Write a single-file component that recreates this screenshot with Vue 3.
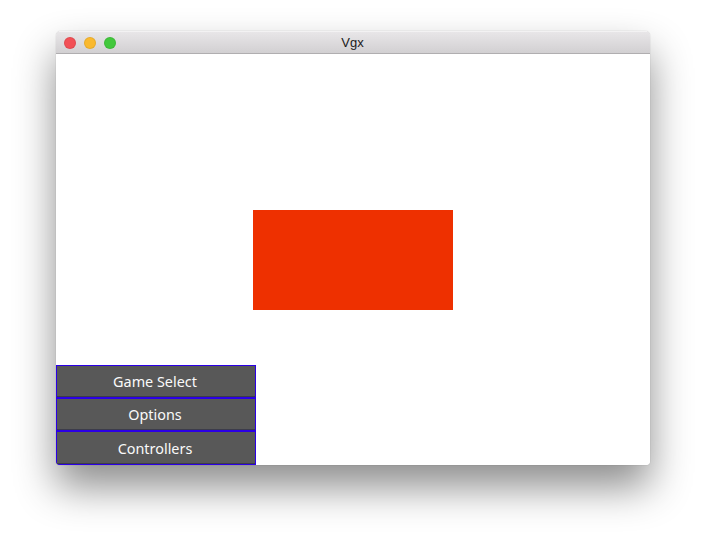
<template>
  <div class="desktop">
    <div class="window">
      <div class="titlebar">
        <div class="lights">
          <span class="light red"></span>
          <span class="light yellow"></span>
          <span class="light green"></span>
        </div>
        <div class="title">Vgx</div>
      </div>
      <div class="content">
        <div class="rect"></div>
        <div class="menu">
          <button v-for="item in items" :key="item" class="menu-btn">{{ item }}</button>
        </div>
      </div>
    </div>
  </div>
</template>

<script setup>
const items = ['Game Select', 'Options', 'Controllers']
</script>

<style>
html, body {
  margin: 0;
  background: #fff;
}
</style>

<style scoped>
.desktop {
  width: 706px;
  height: 545px;
  padding: 31px 56px 80px;
  box-sizing: border-box;
  background: #fff;
  overflow: hidden;
}

.window {
  width: 594px;
  height: 434px;
  border-radius: 5px 5px 4px 4px;
  overflow: hidden;
  display: flex;
  flex-direction: column;
  box-shadow: 0 22px 40px rgba(0, 0, 0, 0.45), 0 0 1px rgba(0, 0, 0, 0.35);
}

.titlebar {
  height: 21px;
  flex: none;
  position: relative;
  display: flex;
  align-items: center;
  justify-content: center;
  background: linear-gradient(#e8e6e8, #d2d0d2);
  border-top: 1px solid #f3f2f3;
  border-bottom: 1px solid #b0aeb0;
  box-sizing: content-box;
}

.lights {
  position: absolute;
  left: 8px;
  top: 5px;
  display: flex;
  gap: 8px;
}

.light {
  width: 12px;
  height: 12px;
  border-radius: 50%;
  box-shadow: inset 0 0 0 1px rgba(0, 0, 0, 0.08);
}

.red { background: #f25056; }
.yellow { background: #fab92e; }
.green { background: #42c83c; }

.title {
  padding-right: 1px;
  font-family: "Liberation Sans", Arial, sans-serif;
  font-size: 13px;
  color: #1c1c1c;
}

.content {
  flex: 1;
  position: relative;
  display: flex;
  align-items: center;
  justify-content: center;
  background: #fff;
}

.rect {
  width: 200px;
  height: 100px;
  background: #ee3000;
}

.menu {
  position: absolute;
  left: 0;
  bottom: 0;
  width: 200px;
  height: 100px;
  display: grid;
  grid-template-rows: 33px 33px 34px;
}

.menu-btn {
  padding: 0 2px 0 0;
  border: 1px solid #2b00e6;
  box-shadow: inset 0 -1px 0 #3c3c4a;
  background: #585858;
  color: #fafafa;
  font-family: "Noto Sans", "Open Sans", sans-serif;
  font-size: 14.4px;
  text-align: center;
}

.menu-btn:not(:last-child) {
  padding-bottom: 1px;
}
</style>
